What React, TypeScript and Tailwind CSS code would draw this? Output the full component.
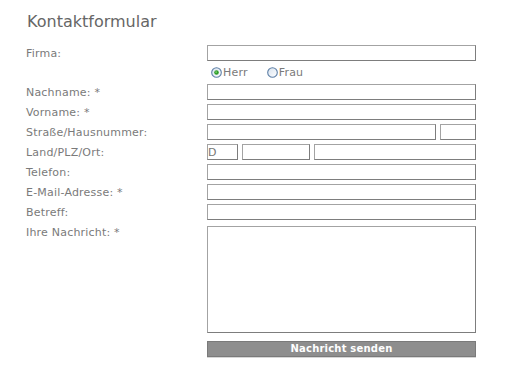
import React from "react";

const inputCls =
  "h-[16px] box-border border border-t-[#a3a3a3] border-l-[#a3a3a3] border-r-[#7d7d7d] border-b-[#7d7d7d] bg-white outline-none text-[11px] text-[#777] px-0 py-0 leading-[14px]";

function Radio({ checked }: { checked?: boolean }) {
  return (
    <svg width="11" height="11" viewBox="0 0 11 11" className="shrink-0">
      <defs>
        <linearGradient id={checked ? "rg1" : "rg2"} x1="0" y1="0" x2="1" y2="1">
          <stop offset="0" stopColor="#d7e2ee" />
          <stop offset="1" stopColor="#ffffff" />
        </linearGradient>
      </defs>
      <circle cx="5.5" cy="5.5" r="4.8" fill={`url(#${checked ? "rg1" : "rg2"})`} stroke="#5d7fa6" strokeWidth="1.1" />
      {checked && (
        <>
          <circle cx="5.5" cy="5.5" r="2.3" fill="#2f9e2a" />
          <circle cx="5.1" cy="5.1" r="0.9" fill="#7fd06a" />
        </>
      )}
    </svg>
  );
}

function Row({ label, children }: { label: string; children: React.ReactNode }) {
  return (
    <div className="flex items-center h-[16px]">
      <div className="w-[181px] shrink-0 text-[11px] text-[#7a7a7a] leading-[13px] tracking-[0.2px]">{label}</div>
      <div className="flex w-[269px] gap-[4px]">{children}</div>
    </div>
  );
}

export default function App() {
  return (
    <div
      className="w-[510px] h-[377px] bg-white pl-[26px] pt-[12px]"
      style={{ fontFamily: '"DejaVu Sans", Verdana, sans-serif' }}
    >
      <div className="text-[16px] leading-[20px] text-[#666] h-[20px] pl-[1px]">Kontaktformular</div>
      <div className="mt-[13px] flex flex-col gap-[4px]">
        <Row label="Firma:">
          <input className={`${inputCls} w-full`} />
        </Row>
        <div className="flex items-center h-[15px]">
          <div className="w-[181px] shrink-0" />
          <div className="flex items-center text-[11px] text-[#7a7a7a] leading-[13px] tracking-[0.2px] pl-[4px]">
            <Radio checked />
            <span className="ml-[1px]">Herr</span>
            <span className="ml-[19px]">
              <Radio />
            </span>
            <span className="ml-[1px]">Frau</span>
          </div>
        </div>
        <Row label="Nachname: *">
          <input className={`${inputCls} w-full`} />
        </Row>
        <Row label="Vorname: *">
          <input className={`${inputCls} w-full`} />
        </Row>
        <Row label="Straße/Hausnummer:">
          <input className={`${inputCls} w-[229px]`} />
          <input className={`${inputCls} w-[36px]`} />
        </Row>
        <Row label="Land/PLZ/Ort:">
          <input className={`${inputCls} w-[31px]`} defaultValue="D" />
          <input className={`${inputCls} w-[68px]`} />
          <input className={`${inputCls} w-[162px]`} />
        </Row>
        <Row label="Telefon:">
          <input className={`${inputCls} w-full`} />
        </Row>
        <Row label="E-Mail-Adresse: *">
          <input className={`${inputCls} w-full`} />
        </Row>
        <Row label="Betreff:">
          <input className={`${inputCls} w-full`} />
        </Row>
        <div className="flex mt-[2px]">
          <div className="w-[181px] shrink-0 text-[11px] text-[#7a7a7a] leading-[13px] tracking-[0.2px]">Ihre Nachricht: *</div>
          <textarea className="w-[269px] h-[107px] box-border border border-t-[#a3a3a3] border-l-[#a3a3a3] border-r-[#7d7d7d] border-b-[#7d7d7d] bg-white outline-none resize-none" />
        </div>
        <div className="flex mt-[4px]">
          <div className="w-[181px] shrink-0" />
          <button className="w-[269px] h-[16px] box-border border border-[#7a7a7a] bg-[#8e8e8e] text-white font-bold text-[10px] leading-[14px] tracking-[0.2px] shadow-[0_1px_0_#d6d6d6]">
            Nachricht senden
          </button>
        </div>
      </div>
    </div>
  );
}
